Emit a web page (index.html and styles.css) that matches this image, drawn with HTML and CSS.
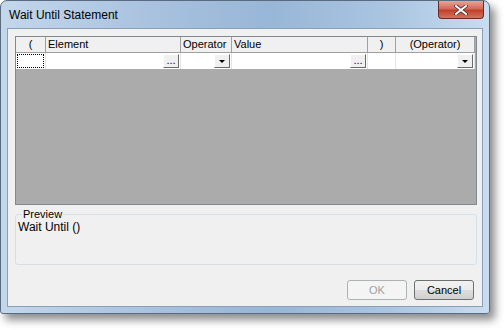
FILE: index.html
```html
<!DOCTYPE html>
<html lang="en">

<head>
    <meta charset="UTF-8">
    <title>Wait Until Statement</title>
    <link rel="stylesheet" href="styles.css">
</head>

<body>
    <div class="window">
        <div class="titlebar">
            <span class="title">Wait Until Statement</span>
            <span class="close">
                <svg width="14" height="10" viewBox="0 0 14 10">
                    <path d="M2 1 L12 9 M12 1 L2 9" stroke="#3a2020" stroke-width="3.4" stroke-linecap="square"/>
                    <path d="M2 1 L12 9 M12 1 L2 9" stroke="#fff" stroke-width="2" stroke-linecap="square"/>
                </svg>
            </span>
        </div>
        <div class="client">
            <div class="grid">
                <div class="row head">
                    <div class="cell center">(</div>
                    <div class="cell">Element</div>
                    <div class="cell">Operator</div>
                    <div class="cell">Value</div>
                    <div class="cell center">)</div>
                    <div class="cell center">(Operator)</div>
                </div>
                <div class="row data">
                    <div class="cell"><span class="focus"></span></div>
                    <div class="cell"><span class="dots">...</span></div>
                    <div class="cell"><span class="drop"></span></div>
                    <div class="cell"><span class="dots">...</span></div>
                    <div class="cell"></div>
                    <div class="cell"><span class="drop"></span></div>
                </div>
                <div class="empty"></div>
            </div>
            <fieldset class="preview">
                <legend>Preview</legend>
                <div class="preview-text">Wait Until ()</div>
            </fieldset>
            <div class="buttons">
                <button class="btn" disabled>OK</button>
                <button class="btn">Cancel</button>
            </div>
        </div>
    </div>
</body>

</html>
```
FILE: styles.css
```css
body {
    margin: 0;
    min-height: 330px;
    background: #fff;
    font-family: "Liberation Sans", Arial, sans-serif;
    font-size: 11px;
}

.window {
    width: 490px;
    height: 314px;
    box-sizing: border-box;
    border: 1px solid #5a6b80;
    border-radius: 7px 7px 3px 3px;
    background: linear-gradient(to right, #c3d7ec, #a9c2df 30%, #98b6d7 55%, #abc5e1 80%, #c9dcf0);
    box-shadow: 5px 6px 9px rgba(0, 0, 0, 0.45);
    padding: 0 6px 6px 6px;
    display: flex;
    flex-direction: column;
}

.titlebar {
    height: 27px;
    display: flex;
    align-items: flex-start;
    justify-content: space-between;
}

.title {
    margin-top: 7px;
    margin-left: 2px;
    color: #000;
    font-size: 12px;
}

.close {
    width: 46px;
    height: 18px;
    margin-right: -1px;
    box-sizing: border-box;
    border: 1px solid #6d2a22;
    border-top: none;
    border-radius: 0 0 4px 4px;
    background: linear-gradient(#e6a59a, #d26a59 45%, #c0412b 55%, #d4735f);
    display: flex;
    align-items: center;
    justify-content: center;
}

.client {
    flex: 1;
    background: #f0f0f0;
    border: 1px solid #8d9fb6;
    padding: 7px 5px 6px 7px;
    display: flex;
    flex-direction: column;
}

.grid {
    height: 167px;
    border: 1px solid #828790;
    background: #ababab;
    display: flex;
    flex-direction: column;
}

.row {
    display: grid;
    grid-template-columns: 30px 135px 51px 136px 28px 79px;
    height: 16px;
}

.head .cell {
    background: #f0f0f0;
    border-right: 1px solid #a0a0a0;
    border-bottom: 1px solid #a0a0a0;
    line-height: 15px;
    padding-left: 2px;
}

.data .cell {
    background: #fff;
    border-right: 1px solid #e4e4e4;
    position: relative;
}

.cell {
    box-sizing: border-box;
    white-space: nowrap;
    overflow: hidden;
    color: #000;
}

.head .cell.center {
    text-align: center;
    padding-left: 0;
}

.focus {
    position: absolute;
    left: 1px;
    top: 1px;
    right: 1px;
    bottom: 1px;
    border: 1px dotted #000;
}

.dots,
.drop {
    position: absolute;
    right: 1px;
    top: 1px;
    width: 16px;
    height: 14px;
    box-sizing: border-box;
    background: #f0f0f0;
    border-right: 1px solid #696969;
    border-bottom: 1px solid #696969;
    border-top: 1px solid #fff;
    border-left: 1px solid #fff;
    font-size: 11px;
    line-height: 10px;
    text-align: center;
    color: #00008b;
}

.drop::after {
    content: "";
    position: absolute;
    left: 4px;
    top: 5px;
    border-left: 3px solid transparent;
    border-right: 3px solid transparent;
    border-top: 3px solid #000;
}

.empty {
    flex: 1;
}

.preview {
    margin: 3px 0 0 0;
    padding: 0 4px 0 4px;
    height: 57px;
    box-sizing: border-box;
    border: 1px solid #d5dfe5;
    border-radius: 3px;
}

.preview legend {
    padding: 0 1px;
    margin-left: 2px;
    font-size: 11px;
    line-height: 12px;
}

.preview-text {
    margin-top: 1px;
    margin-left: -2px;
    font-size: 12px;
    line-height: 13px;
}

.buttons {
    margin-top: auto;
    display: flex;
    justify-content: flex-end;
    gap: 7px;
    padding-right: 3px;
}

.btn {
    width: 60px;
    height: 20px;
    font-family: "Liberation Sans", Arial, sans-serif;
    font-size: 11px;
    color: #000;
    border: 1px solid #707070;
    border-radius: 3px;
    background: linear-gradient(#f2f2f2 0%, #ebebeb 48%, #dddddd 52%, #cfcfcf 100%);
    padding: 0;
}

.btn:disabled {
    color: #a0a0a0;
    border-color: #adb2b5;
    background: #f4f4f4;
}
```
